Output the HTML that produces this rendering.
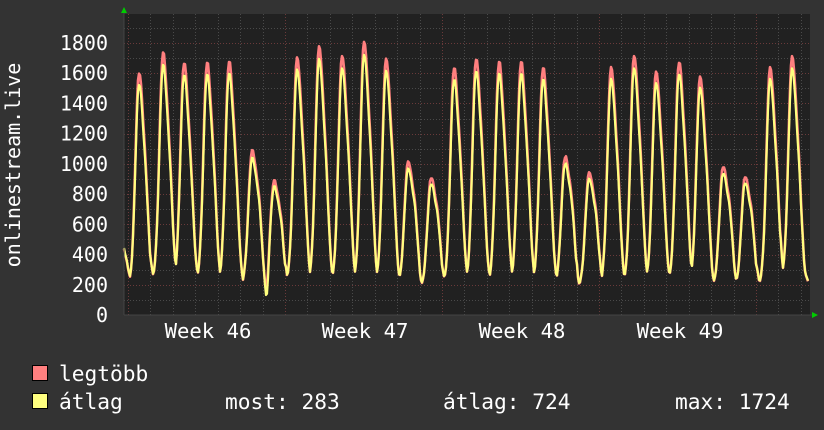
<!DOCTYPE html>
<html><head><meta charset="utf-8"><style>
html,body{margin:0;padding:0;background:#333;width:824px;height:430px;overflow:hidden}
svg{display:block}
text{font-family:"DejaVu Sans Mono","Liberation Mono",monospace;fill:#fff;font-size:20px}
.lg{font-size:21.2px}
</style></head><body>
<svg id="g" width="824" height="430" xmlns="http://www.w3.org/2000/svg">
<rect x="0" y="0" width="824" height="430" fill="#333"/>
<rect x="124" y="14" width="686" height="301" fill="#212121"/>
<g id="grid"></g>
<g id="lines"></g>
<line x1="124" y1="315" x2="812" y2="315" stroke="#444" stroke-width="1"/>
<line x1="124" y1="315" x2="124" y2="12" stroke="#444" stroke-width="1"/>
<polygon points="121,13 127,13 124,7" fill="#0c0"/>
<polygon points="812,312 812,318 818,315" fill="#0c0"/>
<g id="ylab" text-anchor="end"></g>
<text x="0" y="0" transform="translate(20,165) rotate(-90)" text-anchor="middle">onlinestream.live</text>
<text x="208" y="338" text-anchor="middle" style="font-size:20.6px">Week 46</text>
<text x="365" y="338" text-anchor="middle" style="font-size:20.6px">Week 47</text>
<text x="522" y="338" text-anchor="middle" style="font-size:20.6px">Week 48</text>
<text x="680" y="338" text-anchor="middle" style="font-size:20.6px">Week 49</text>
<rect x="32.5" y="365.5" width="15" height="15" fill="#ff7f7f" stroke="#000"/>
<rect x="32.5" y="393.5" width="15" height="15" fill="#ffff7f" stroke="#000"/>
<text class="lg" x="59" y="381">legtöbb</text>
<text class="lg" x="59" y="409">átlag</text>
<text class="lg" x="225" y="409">most: 283</text>
<text class="lg" x="443" y="409">átlag: 724</text>
<text class="lg" x="675" y="409">max: 1724</text>
</svg>
<script>
var NS="http://www.w3.org/2000/svg";
function el(p,n,a){var e=document.createElementNS(NS,n);for(var k in a)e.setAttribute(k,a[k]);p.appendChild(e);return e;}
function Y(v){return 315-v*0.1511;}
var grid=document.getElementById("grid");
for(var v=100;v<=1900;v+=100){var y=Math.round(Y(v))+0.5;if(y<14)continue;
 el(grid,"line",{x1:124,x2:810,y1:y,y2:y,stroke:(v%200==0)?"#6a3a3a":"#4a4a4a","stroke-dasharray":"1,2"});}
for(var d=-1;d<31;d++){var x=Math.round(128+d*22.43)+0.5;if(x<124||x>810)continue;
 el(grid,"line",{x1:x,x2:x,y1:14,y2:315,stroke:(d%7==0)?"#6a3a3a":"#4a4a4a","stroke-dasharray":"1,2"});}
var yl=document.getElementById("ylab");
for(var v=0;v<=1800;v+=200){var t=el(yl,"text",{x:108,y:Y(v)+7});t.textContent=v;}
var px=[139,163,184,207,229,252,274,297,319,342,364,386,408,431,454,476,499,521,543,565,589,611,634,656,679,700,723,745,770,792];
var pk=[1601,1734,1668,1668,1676,1085,887,1700,1773,1714,1807,1694,1012,907,1635,1694,1674,1674,1635,1045,940,1635,1714,1610,1674,1575,980,913,1635,1707];
var tr=[180,230,220,220,210,200,180,220,210,210,205,200,190,175,200,205,205,210,205,195,185,200,200,205,210,205,185,180,200,240];
function val(x,avg){
 var best=0,base=220;
 for(var i=0;i<px.length;i++){var d=x-px[i];
  var s=d<0?3.6:4.6;var g=Math.exp(-(d*d)/(2*s*s));
  var sh=d>0?0.3*Math.exp(-((d-7.5)*(d-7.5))/(2*2.8*2.8)):0;
  var p=pk[i]*(avg?0.95:1);
  var c=(p-tr[i])*(g+sh*(p>1200?0.8:1.2));
  if(d>-12&&d<=11)base=tr[i];
  best=Math.max(best,c);}
 var v=base+best;
 if(x>262&&x<271)v-= (avg?150:90)*Math.exp(-((x-267)*(x-267))/3);
 if(x<131)v=Math.max(v,440-(x-124)*32);
 v+=Math.sin(x*1.7)*6;
 return v;}
var r="",yv="";
for(var x=124;x<=808;x+=1){r+=x+","+Y(val(x,false)).toFixed(1)+" ";yv+=x+","+Y(val(x,true)+5).toFixed(1)+" ";}
var L=document.getElementById("lines");
el(L,"polyline",{points:r,fill:"none",stroke:"#ff7f7f","stroke-width":2.6,"stroke-linejoin":"round"});
el(L,"polyline",{points:yv,fill:"none",stroke:"#ffff7f","stroke-width":2.2,"stroke-linejoin":"round"});
</script>
</body></html>
